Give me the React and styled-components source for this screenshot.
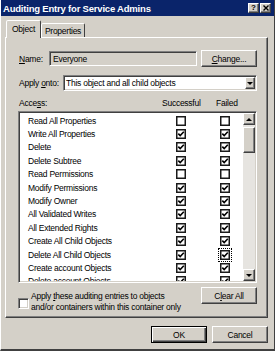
import styled, { createGlobalStyle } from 'styled-components';

const FONT = `"Liberation Sans", Arial, sans-serif`;
const FACE = '#d4d0c8';

const GlobalStyle = createGlobalStyle`
  html, body {
    margin: 0;
    padding: 0;
    background: ${FACE};
  }

  body {
    font-family: ${FONT};
    font-size: 8.5px;
    letter-spacing: -0.25px;
    color: #000;
  }
`;

const raised = `
  border: 1px solid;
  border-color: #fff #404040 #404040 #fff;
  box-shadow: inset -1px -1px #808080;
`;

const sunken = `
  border: 1px solid;
  border-color: #808080 #fff #fff #808080;
  box-shadow: inset 1px 1px #404040, inset -1px -1px ${FACE};
`;

const Window = styled.div`
  width: 275px;
  height: 351px;
  box-sizing: border-box;
  border-left: 1px solid #fff;
  border-right: 1px solid #404040;
  border-bottom: 2px solid #404040;
  background: ${FACE};
  display: flex;
  flex-direction: column;
  overflow: hidden;
`;

const TitleBar = styled.div`
  height: 16px;
  flex: none;
  background: #0a246a;
  display: flex;
  align-items: center;
  padding: 0 3px 0 2px;
`;

const Title = styled.div`
  flex: 1;
  color: #fff;
  font-weight: bold;
  font-size: 9.5px;
  letter-spacing: -0.2px;
  white-space: nowrap;
`;

const CaptionButtons = styled.div`
  display: flex;
  gap: 1px;
`;

const CaptionButton = styled.div`
  ${raised}
  box-sizing: border-box;
  width: 11px;
  height: 10px;
  background: ${FACE};
  display: flex;
  align-items: center;
  justify-content: center;
  font-weight: bold;
  font-size: 8px;
  letter-spacing: 0;
  line-height: 1;
`;

const Content = styled.div`
  flex: 1;
  padding: 4px 6px 0 4px;
  display: flex;
  flex-direction: column;
`;

const TabStrip = styled.div`
  height: 18px;
  margin: 0 0 -1px 1px;
  display: flex;
  position: relative;
  z-index: 1;
`;

const Tab = styled.div`
  box-sizing: border-box;
  width: ${({ $w }) => $w}px;
  height: ${({ $active }) => ($active ? 18 : 14)}px;
  margin-top: ${({ $active }) => ($active ? 0 : 3)}px;
  border: 1px solid;
  border-bottom: none;
  border-color: #fff #404040 transparent #fff;
  border-radius: 2px 2px 0 0;
  background: ${FACE};
  display: flex;
  align-items: ${({ $active }) => ($active ? 'flex-start' : 'center')};
  padding-top: ${({ $active }) => ($active ? 3 : 0)}px;
  justify-content: center;
  white-space: nowrap;
`;

const Panel = styled.div`
  ${raised}
  height: 281px;
  box-sizing: border-box;
  padding: 12px 10px 4px 12px;
  display: flex;
  flex-direction: column;
`;

const Row = styled.div`
  display: flex;
  align-items: center;
  height: ${({ $h }) => $h}px;
  margin-top: ${({ $mt = 0 }) => $mt}px;
  flex: none;
`;

const Label = styled.div`
  width: ${({ $w }) => $w}px;
  padding-left: 1px;
  box-sizing: border-box;
  white-space: nowrap;
  flex: none;
`;

const Key = styled.span`
  text-decoration: underline;
`;

const TextBox = styled.div`
  ${sunken}
  box-sizing: border-box;
  width: 148px;
  height: 15px;
  background: ${FACE};
  padding-left: 3px;
  display: flex;
  align-items: center;
`;

const Button = styled.div`
  box-sizing: border-box;
  width: 56px;
  height: 17px;
  margin-left: ${({ $ml = 0 }) => $ml}px;
  background: ${FACE};
  display: flex;
  align-items: center;
  justify-content: center;
  flex: none;
  ${({ $default }) =>
    $default
      ? `border: 1px solid #000;
         box-shadow: inset 1px 1px #fff, inset -1px -1px #404040, inset -2px -2px #808080;`
      : raised}
`;

const Select = styled.div`
  ${sunken}
  box-sizing: border-box;
  width: 194px;
  height: 16px;
  background: #fff;
  display: flex;
  align-items: stretch;
  padding: 1px;
`;

const SelectText = styled.div`
  flex: 1;
  padding-left: 1px;
  display: flex;
  align-items: center;
  white-space: nowrap;
`;

const ArrowButton = styled.div`
  ${raised}
  box-sizing: border-box;
  width: ${({ $w = 10 }) => $w}px;
  height: ${({ $h }) => ($h ? `${$h}px` : 'auto')};
  background: ${FACE};
  display: flex;
  align-items: center;
  justify-content: center;
  flex: none;
`;

const Arrow = styled.div`
  width: 0;
  height: 0;
  border-left: 3px solid transparent;
  border-right: 3px solid transparent;
  ${({ $up }) => ($up ? 'border-bottom' : 'border-top')}: 3px solid #000;
`;

const Header = styled.div`
  display: grid;
  grid-template-columns: 144px 54px auto;
  height: 12px;
  margin-top: 6px;
  align-items: center;
  white-space: nowrap;
`;

const List = styled.div`
  ${sunken}
  box-sizing: border-box;
  height: 172px;
  margin-top: 2px;
  padding: 1px;
  background: #fff;
  display: flex;
  flex: none;
  overflow: hidden;
`;

const Items = styled.div`
  flex: 1;
  padding-top: 1px;
  overflow: hidden;
`;

const Item = styled.div`
  display: grid;
  grid-template-columns: 148px 44px 10px;
  align-items: center;
  height: 13.4px;
  padding-left: 8px;
  white-space: nowrap;
`;

const Cell = styled.div`
  position: relative;
  width: 10px;
  height: 10px;
  display: flex;

  ${({ $focus }) =>
    $focus &&
    `&::after {
      content: '';
      position: absolute;
      inset: -2px;
      border: 1px dotted #000;
    }`}
`;

const ScrollBar = styled.div`
  width: 12px;
  flex: none;
  display: flex;
  flex-direction: column;
  background: #e6e4e0;
`;

const Thumb = styled.div`
  ${raised}
  box-sizing: border-box;
  height: 26px;
  margin-top: 2px;
  background: ${FACE};
`;

const Track = styled.div`
  flex: 1;
`;

const Bottom = styled.div`
  display: flex;
  align-items: flex-start;
  margin-top: 4px;
  height: 26px;
`;

const Option = styled.div`
  flex: 1;
  display: flex;
  align-items: flex-start;
  padding-top: 4px;
`;

const SmallCheck = styled.div`
  ${sunken}
  box-sizing: border-box;
  width: 11px;
  height: 11px;
  background: #fff;
  margin-top: 7px;
  flex: none;
`;

const OptionText = styled.div`
  margin-left: 2px;
  line-height: 11px;
  white-space: nowrap;
`;

const Footer = styled.div`
  display: flex;
  justify-content: flex-end;
  gap: 5px;
  margin-top: 8px;
`;

const rows = [
  ['Read All Properties', false, false],
  ['Write All Properties', true, true],
  ['Delete', true, true],
  ['Delete Subtree', true, true],
  ['Read Permissions', false, false],
  ['Modify Permissions', true, true],
  ['Modify Owner', true, true],
  ['All Validated Writes', true, true],
  ['All Extended Rights', true, true],
  ['Create All Child Objects', true, true],
  ['Delete All Child Objects', true, true, true],
  ['Create account Objects', true, true],
  ['Delete account Objects', true, true],
];

const CheckBox = ({ checked, focus }) => (
  <Cell $focus={focus}>
    <svg width="10" height="10" viewBox="0 0 10 10">
      <rect x="0.75" y="0.75" width="8.5" height="8.5" fill="#fff" stroke="#1a1a1a" strokeWidth="1.5" />
      {checked && (
        <polyline points="2.3,4.6 4.2,6.6 7.8,2.8" fill="none" stroke="#000" strokeWidth="1.6" />
      )}
    </svg>
  </Cell>
);

const App = () => {
  return (
    <>
      <GlobalStyle />
      <Window>
        <TitleBar>
          <Title>Auditing Entry for Service Admins</Title>
          <CaptionButtons>
            <CaptionButton>?</CaptionButton>
            <CaptionButton>
              <svg width="6" height="6" viewBox="0 0 6 6">
                <path d="M0.5 0.5 L5.5 5.5 M5.5 0.5 L0.5 5.5" stroke="#000" strokeWidth="1.4" />
              </svg>
            </CaptionButton>
          </CaptionButtons>
        </TitleBar>

        <Content>
          <TabStrip>
            <Tab $active $w={35}>Object</Tab>
            <Tab $w={44}>Properties</Tab>
          </TabStrip>

          <Panel>
            <Row $h={17}>
              <Label $w={31}><Key>N</Key>ame:</Label>
              <TextBox>Everyone</TextBox>
              <Button $ml={4}><Key>C</Key>hange...</Button>
            </Row>

            <Row $h={16} $mt={8}>
              <Label $w={45}>Apply <Key>o</Key>nto:</Label>
              <Select>
                <SelectText>This object and all child objects</SelectText>
                <ArrowButton>
                  <Arrow />
                </ArrowButton>
              </Select>
            </Row>

            <Header>
              <Label $w={144}>Acce<Key>s</Key>s:</Label>
              <span>Successful</span>
              <span>Failed</span>
            </Header>

            <List>
              <Items>
                {rows.map(([name, ok, failed, focus]) => (
                  <Item key={name}>
                    <span>{name}</span>
                    <CheckBox checked={ok} />
                    <CheckBox checked={failed} focus={focus} />
                  </Item>
                ))}
              </Items>
              <ScrollBar>
                <ArrowButton $w={12} $h={12}>
                  <Arrow $up />
                </ArrowButton>
                <Thumb />
                <Track />
                <ArrowButton $w={12} $h={12}>
                  <Arrow />
                </ArrowButton>
              </ScrollBar>
            </List>

            <Bottom>
              <Option>
                <SmallCheck />
                <OptionText>
                  Apply <Key>t</Key>hese auditing entries to objects
                  <br />
                  and/or containers within this container only
                </OptionText>
              </Option>
              <Button>C<Key>l</Key>ear All</Button>
            </Bottom>
          </Panel>

          <Footer>
            <Button $default>OK</Button>
            <Button>Cancel</Button>
          </Footer>
        </Content>
      </Window>
    </>
  );
};

export default App;
